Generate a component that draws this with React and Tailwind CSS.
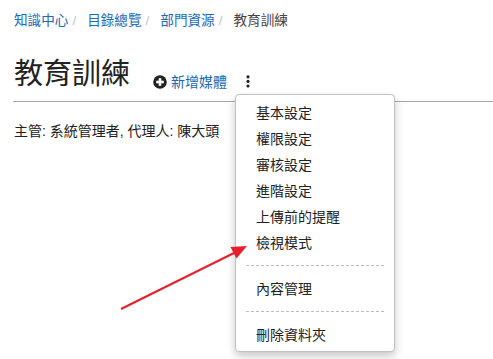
import React from "react";

const items1 = ["基本設定", "權限設定", "審核設定", "進階設定", "上傳前的提醒", "檢視模式"];

export default function App() {
  return (
    <div className="relative w-[493px] h-[359px] overflow-hidden bg-white text-[#222] font-['Liberation_Sans','Noto_Sans_CJK_TC',sans-serif]">
      <div className="pl-[14px] pt-[12px]">
        <nav className="flex items-center h-[18px] text-[13.6px] leading-[18px]">
          <span className="text-[#2267b4]">知識中心</span>
          <span className="ml-[4px] mr-[11px] text-[#c4c4c4]">/</span>
          <span className="text-[#2267b4]">目錄總覽</span>
          <span className="ml-[4px] mr-[11px] text-[#c4c4c4]">/</span>
          <span className="text-[#2267b4]">部門資源</span>
          <span className="ml-[4px] mr-[11px] text-[#c4c4c4]">/</span>
          <span className="text-[#444]">教育訓練</span>
        </nav>
        <div className="mt-[24px] flex items-end h-[40px]">
          <h1 className="text-[29px] leading-[40px] font-normal text-[#222]">教育訓練</h1>
          <div className="ml-[23px] mb-[3px] flex items-center gap-[4px] h-[18px]">
            <svg width="14" height="14" viewBox="0 0 14 14">
              <circle cx="7" cy="7" r="6.8" fill="#222" />
              <rect x="3.2" y="5.7" width="7.6" height="2.6" fill="#fff" />
              <rect x="5.7" y="3.2" width="2.6" height="7.6" fill="#fff" />
            </svg>
            <span className="text-[14px] leading-[18px] text-[#2267b4]">新增媒體</span>
          </div>
          <div className="ml-[19px] mb-[6px]">
            <svg width="4" height="13" viewBox="0 0 4 13">
              <circle cx="2" cy="1.8" r="1.6" fill="#222" />
              <circle cx="2" cy="6.4" r="1.6" fill="#222" />
              <circle cx="2" cy="11" r="1.6" fill="#222" />
            </svg>
          </div>
        </div>
      </div>
      <div className="mt-[7px] ml-[13px] h-px bg-[#a8a8a8]" />
      <p className="mt-[19px] pl-[14px] text-[14px] leading-[20px] text-[#222]">
        主管: 系統管理者, 代理人: 陳大頭
      </p>

      <div className="absolute left-[235px] top-[94px] w-[160px] rounded-[4px] border border-[#c2c2c2] bg-white pt-[5px] pb-[3px] shadow-[0_4px_8px_rgba(0,0,0,0.22)]">
        {items1.map((t) => (
          <div key={t} className="h-[26px] pl-[20px] text-[14px] leading-[26px] text-[#222]">
            {t}
          </div>
        ))}
        <div className="mx-[10px] mt-[9px] mb-[10px] border-t border-dashed border-[#bdbdbd]" />
        <div className="h-[26px] pl-[20px] text-[14px] leading-[26px] text-[#222]">內容管理</div>
        <div className="mx-[10px] mt-[9px] mb-[10px] border-t border-dashed border-[#bdbdbd]" />
        <div className="h-[26px] pl-[20px] text-[14px] leading-[26px] text-[#222]">刪除資料夾</div>
      </div>

      <svg className="absolute left-0 top-0" width="493" height="359" viewBox="0 0 493 359">
        <line x1="121" y1="309" x2="236" y2="252" stroke="#e5202a" strokeWidth="2" />
        <polygon points="247,246 230.5,247 236.5,258.5" fill="#e5202a" />
      </svg>
    </div>
  );
}
